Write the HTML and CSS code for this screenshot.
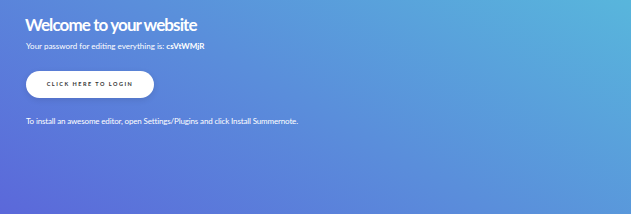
FILE: index.html
```html
<!DOCTYPE html>
<html lang="en">
<head>
  <meta charset="UTF-8">
  <meta name="viewport" content="width=device-width, initial-scale=1.0">
  <title>Welcome</title>
  <link rel="stylesheet" href="styles.css">
</head>
<body>
  <div class="hero">
    <h1>Welcome to your website</h1>
    <p class="password">Your password for editing everything is: <b>csVtWMjR</b></p>
    <a class="login-button" href="#">Click here to login</a>
    <p class="hint">To install an awesome editor, open Settings/Plugins and click Install Summernote.</p>
  </div>
</body>
</html>
```

FILE: styles.css
```css
* {
  margin: 0;
  padding: 0;
  box-sizing: border-box;
}
body {
  font-family: Lato, sans-serif;
  color: white;
  height: 100vh;
  background: linear-gradient(30deg, #5b68da 0%, #5a8edb 50%, #58b6dc 100%);
}
.hero {
  padding: 12px 26px;
}
h1 {
  font-size: 17px;
  font-weight: 700;
  line-height: 26px;
  letter-spacing: -0.9px;
  margin-left: -1px;
}
.password {
  font-size: 8px;
  line-height: 12px;
  margin-top: 2px;
}
.password b {
  font-weight: 700;
}
.login-button {
  display: inline-block;
  margin-top: 19px;
  width: 128px;
  height: 27px;
  line-height: 27px;
  border-radius: 14px;
  background: white;
  color: #333;
  text-align: center;
  text-decoration: none;
  text-transform: uppercase;
  font-size: 5.5px;
  font-weight: 700;
  letter-spacing: 1.5px;
  box-shadow: 0 2px 6px rgba(0, 0, 0, 0.1);
}
.hint {
  font-size: 8px;
  line-height: 12px;
  margin-top: 17px;
  letter-spacing: -0.15px;
}
```
